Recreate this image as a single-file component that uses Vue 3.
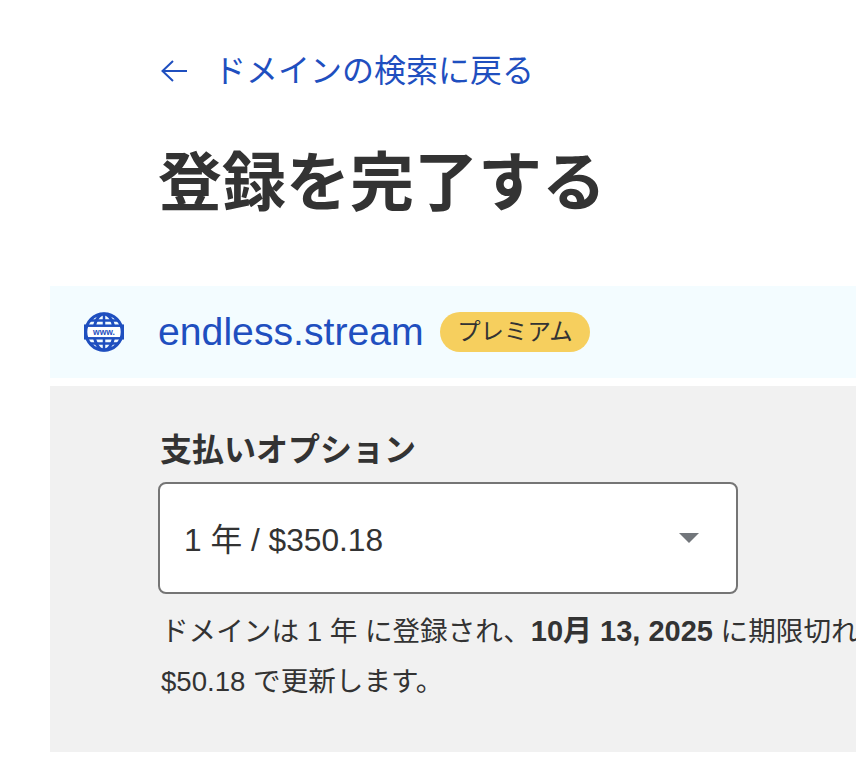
<script setup>
const backLabel = 'ドメインの検索に戻る'
const title = '登録を完了する'
const domain = 'endless.stream'
const badge = 'プレミアム'
const optionLabel = '支払いオプション'
const selected = '1 年 / $350.18'
</script>

<template>
  <div class="page">
    <a class="back">
      <svg class="arrow" viewBox="0 0 26 22" width="26" height="22" fill="none" stroke="currentColor" stroke-width="2">
        <path d="M12 1 1.500 11 12 21M1.500 11H26" />
      </svg>
      <span>{{ backLabel }}</span>
    </a>
    <h1 class="title">{{ title }}</h1>
    <div class="banner">
      <svg class="globe" viewBox="0 0 40 40" width="40" height="40" fill="none" stroke="#1f4fbf" stroke-width="3">
        <ellipse cx="20" cy="20" rx="10" ry="18" />
        <path d="M20 2v36M5 8.500h30M5 31.500h30" stroke-width="2.500" />
        <rect x="1" y="13.700" width="38" height="12.600" fill="#fff" stroke="#1f4fbf" stroke-width="2.500" />
        <circle cx="20" cy="20" r="18.200" stroke-width="3" />
        <text x="20" y="22.900" text-anchor="middle" class="www" fill="#1f4fbf" stroke="none">www.</text>
      </svg>
      <span class="domain">{{ domain }}</span>
      <span class="badge">{{ badge }}</span>
    </div>
    <section class="panel">
      <label class="label">{{ optionLabel }}</label>
      <div class="select">
        <span class="value">{{ selected }}</span>
        <i class="caret"></i>
      </div>
      <p class="note">ドメインは 1 年 に登録され、<b>10月 13, 2025</b> に期限切れになり、<br />$50.18 で更新します。</p>
    </section>
  </div>
</template>

<style scoped>
.page {
  width: 856px;
  height: 770px;
  overflow: hidden;
  background: #fff;
  color: #333;
  font-family: "Liberation Sans", "Noto Sans CJK JP", sans-serif;
  box-sizing: border-box;
  padding-top: 49px;
}
.back {
  display: flex;
  align-items: center;
  gap: 27px;
  margin-left: 161px;
  height: 44px;
  color: #1f4fbf;
  font-size: 32px;
  line-height: 44px;
  white-space: nowrap;
}
.arrow { flex: none; }
.title {
  margin: 50px 0 0 158px;
  font-size: 64px;
  line-height: 80px;
  font-weight: 700;
  white-space: nowrap;
}
.banner {
  display: flex;
  align-items: center;
  height: 92px;
  margin: 63px 0 0 50px;
  padding-left: 34px;
  background: #f3fcff;
}
.globe { flex: none; }
.www { font-size: 8.500px; font-weight: 700; font-family: "Liberation Sans", sans-serif; }
.domain {
  margin-left: 34px;
  color: #1f4fbf;
  font-size: 39.200px;
  white-space: nowrap;
}
.badge {
  margin-left: 16px;
  height: 40px;
  padding: 0 17.500px;
  border-radius: 20px;
  background: #f6cf5e;
  font-size: 23.400px;
  line-height: 40px;
  white-space: nowrap;
}
.panel {
  height: 366px;
  margin: 8px 0 0 50px;
  padding: 44px 0 0 108px;
  box-sizing: border-box;
  background: #f1f1f1;
}
.label {
  display: block;
  margin-left: 2px;
  font-size: 32px;
  line-height: 40px;
  font-weight: 700;
  white-space: nowrap;
}
.select {
  display: flex;
  align-items: center;
  justify-content: space-between;
  box-sizing: border-box;
  width: 580px;
  height: 112px;
  margin-top: 12px;
  padding: 0 37px 0 24px;
  border: 2px solid #757575;
  border-radius: 8px;
  background: #fff;
  font-size: 31.700px;
}
.value { margin-bottom: 3px; }
.caret {
  width: 0;
  height: 0;
  border-left: 10px solid transparent;
  border-right: 10px solid transparent;
  border-top: 10px solid #72767b;
}
.note {
  margin: 12px 0 0 3px;
  width: 900px;
  font-size: 27.600px;
  line-height: 50px;
}
.note b { font-weight: 700; font-size: 29px; }
</style>
